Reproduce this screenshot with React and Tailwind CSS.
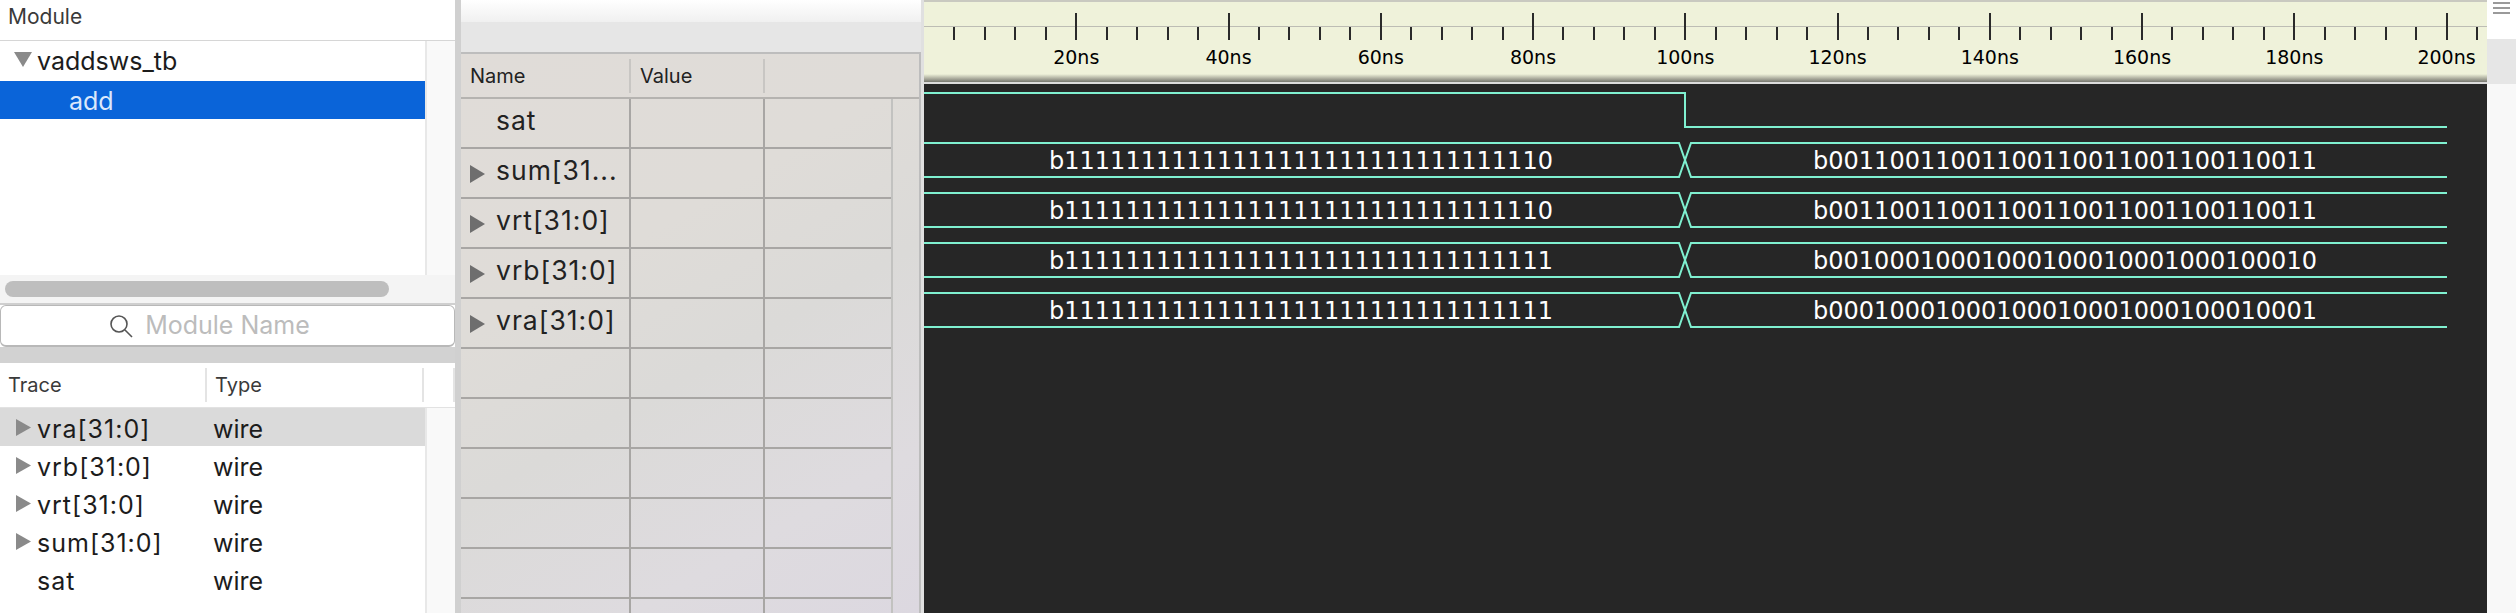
const sans = "font-['Inter','Noto_Sans',sans-serif]";

const traces = [
  { name: "vra[31:0]", bus: true, active: true },
  { name: "vrb[31:0]", bus: true },
  { name: "vrt[31:0]", bus: true },
  { name: "sum[31:0]", bus: true },
  { name: "sat", bus: false },
];

const names = [
  { name: "sat", bus: false },
  { name: "sum[31...", bus: true },
  { name: "vrt[31:0]", bus: true },
  { name: "vrb[31:0]", bus: true },
  { name: "vra[31:0]", bus: true },
  {},
  {},
  {},
  {},
  {},
  {},
];

const buses = [
  {
    top: 59,
    left: "b11111111111111111111111111111110",
    right: "b00110011001100110011001100110011",
  },
  {
    top: 109,
    left: "b11111111111111111111111111111110",
    right: "b00110011001100110011001100110011",
  },
  {
    top: 159,
    left: "b11111111111111111111111111111111",
    right: "b00100010001000100010001000100010",
  },
  {
    top: 209,
    left: "b11111111111111111111111111111111",
    right: "b00010001000100010001000100010001",
  },
];

const STEP = 30.45;
const ticks = Array.from({ length: 51 }, (_, i) => i + 1);

function Arrow({ down, className }) {
  return (
    <svg viewBox="0 0 16 16" preserveAspectRatio="none" className={`block ${className}`}>
      {down ? (
        <polygon points="0,0 16,0 8,16" fill="currentColor" />
      ) : (
        <polygon points="0,0 16,8 0,16" fill="currentColor" />
      )}
    </svg>
  );
}

function Ruler() {
  return (
    <div className="h-[84px] bg-[#eff2da]">
      <svg width="1563" height="84" className="block">
        <rect x="0" y="0" width="1563" height="2" fill="#c9c9c0" />
        <rect x="0" y="26" width="1563" height="1" fill="#bdbdb4" />
        {ticks.map((i) => (
          <line
            key={i}
            x1={Math.round(i * STEP)}
            x2={Math.round(i * STEP)}
            y1={i % 5 === 0 ? 13 : 27}
            y2="40"
            stroke="#2a2a2a"
            strokeWidth="2"
          />
        ))}
        {ticks
          .filter((i) => i % 5 === 0)
          .map((i) => (
            <text
              key={i}
              x={i * STEP}
              y="64"
              textAnchor="middle"
              fontSize="19"
              fill="#000"
              fontFamily="'DejaVu Sans', sans-serif"
            >
              {i * 4}ns
            </text>
          ))}
        <defs>
          <linearGradient id="rulerEdge" x1="0" y1="0" x2="0" y2="1">
            <stop offset="0" stopColor="#eff2da" />
            <stop offset="1" stopColor="#77776f" />
          </linearGradient>
        </defs>
        <rect x="0" y="74" width="1563" height="8" fill="url(#rulerEdge)" />
        <rect x="0" y="82" width="1563" height="2" fill="#dcdcdc" />
      </svg>
    </div>
  );
}

function Waves() {
  const c = "#7ff0d0";
  return (
    <svg width="1563" height="529" className="block">
      <polyline
        points="0,9 761,9 761,43 1523,43"
        fill="none"
        stroke={c}
        strokeWidth="2"
      />
      {buses.map((b) => {
        const y1 = b.top;
        const y2 = b.top + 34;
        return (
          <g key={b.top}>
            <polyline
              points={`0,${y1} 755,${y1} 767,${y2} 1523,${y2}`}
              fill="none"
              stroke={c}
              strokeWidth="2"
            />
            <polyline
              points={`0,${y2} 755,${y2} 767,${y1} 1523,${y1}`}
              fill="none"
              stroke={c}
              strokeWidth="2"
            />
            <text
              x="377"
              y={y1 + 26}
              textAnchor="middle"
              fontSize="24"
              fill="#fff"
              fontFamily="'DejaVu Sans', sans-serif"
            >
              {b.left}
            </text>
            <text
              x="1141"
              y={y1 + 26}
              textAnchor="middle"
              fontSize="24"
              fill="#fff"
              fontFamily="'DejaVu Sans', sans-serif"
            >
              {b.right}
            </text>
          </g>
        );
      })}
    </svg>
  );
}

export default function App() {
  return (
    <div className={`flex w-[2516px] h-[613px] overflow-hidden bg-white ${sans}`}>
      {/* Left Side */}
      <div className="w-[455px] shrink-0 flex flex-col">
        <div className="h-[41px] border-b border-[#d6d6d6] pl-2 pb-[6px] flex items-center text-[21px] text-[#3a3a3a]">
          Module
        </div>

        <div className="h-[234px] flex">
          <div className="w-[425px] text-[25px] text-[#1c1c1c]">
            <div className="h-[40px] flex items-center pt-[2px]">
              <Arrow down className="w-[18px] h-[15px] ml-[14px] mr-[5px] -mt-[6px] text-[#8a8a8a]" />
              vaddsws_tb
            </div>
            <div className="h-[38px] bg-[#0a64d9] text-[#dbe8fb] flex items-center pl-[69px] pt-[3px]">
              add
            </div>
          </div>
          <div className="w-[30px] bg-[#f9f9f9] border-l-2 border-[#e8e8e8]" />
        </div>

        <div className="h-[30px] bg-[#f4f4f4] flex items-center pl-[5px] pr-[66px] border-b-2 border-[#cfcfcf]">
          <div className="h-[16px] w-full rounded-full bg-[#bebebe]" />
        </div>

        <div className="h-[42px] bg-white rounded-md border border-[#b8b8b8] border-b-2 flex items-center justify-center gap-3 pr-[36px] pt-[1px] text-[25px] text-[#bcbcbc]">
          <svg width="24" height="24" viewBox="0 0 24 24" fill="none" stroke="#555" strokeWidth="1.6">
            <circle cx="10" cy="10" r="8" />
            <line x1="16" y1="16" x2="23" y2="23" />
          </svg>
          Module Name
        </div>

        <div className="h-[16px] bg-[#d2d2d2]" />

        <div className="h-[45px] border-b border-[#e2e2e2] flex items-center text-[20px] text-[#3a3a3a]">
          <div className="w-[207px] h-[34px] pl-2 flex items-center border-r-2 border-[#e4e4e4]">Trace</div>
          <div className="w-[217px] h-[34px] pl-[8px] flex items-center border-r-2 border-[#e4e4e4]">Type</div>
          <div className="flex-1 h-[34px] border-r-2 border-[#e4e4e4]" />
        </div>

        <div className="flex-1 flex min-h-0">
          <div className="w-[425px] text-[25px] text-[#1c1c1c]">
            {traces.map((t) => (
              <div
                key={t.name}
                className={`h-[38px] flex items-center ${t.active ? "bg-[#dadada]" : ""}`}
              >
                <div className="w-[37px] pl-[16px]">
                  {t.bus && <Arrow className="w-[15px] h-[17px] text-[#8a8a8a]" />}
                </div>
                <div className="w-[176px] pt-[5px] tracking-[1px]">{t.name}</div>
                <div className="pt-[5px]">wire</div>
              </div>
            ))}
          </div>
          <div className="w-[30px] bg-[#f9f9f9] border-l-2 border-[#e8e8e8]" />
        </div>
      </div>

      {/* Splitter */}
      <div className="w-[6px] shrink-0 bg-[#d0d0d0]" />

      {/* Names */}
      <div className="w-[460px] shrink-0 flex flex-col">
        <div className="h-[22px] bg-gradient-to-b from-white to-[#f0f0f0]" />
        <div className="h-[30px] bg-[#e6e6e6]" />
        <div className="flex-1 border-t-2 border-r-2 border-[#bdbdbd] bg-[linear-gradient(150deg,#e0dcd8_0%,#dfdcd8_35%,#dbdad8_55%,#dedbdf_80%,#dcd8e0_100%)] text-[#222] min-h-0">
          <div className="h-[45px] border-b-2 border-[#b5b3b0] flex items-center text-[20px]">
            <div className="w-[170px] h-[34px] pl-[9px] flex items-center border-r-2 border-[#c8c6c3]">Name</div>
            <div className="w-[134px] h-[34px] pl-[9px] flex items-center border-r-2 border-[#c8c6c3]">Value</div>
          </div>
          <div className="flex">
            <div className="w-[430px] text-[26.5px]">
              {names.map((n, i) => (
                <div key={i} className="h-[50px] flex border-b-2 border-[#a8a6a4]">
                  <div className="w-[170px] border-r-2 border-[#a8a6a4] flex items-center">
                    <div className="w-[35px] pl-[9px]">
                      {n.bus && <Arrow className="w-[15px] h-[18px] mt-[2px] text-[#6e6e6e]" />}
                    </div>
                    <div className="pb-[4px] tracking-[1px] whitespace-nowrap">{n.name}</div>
                  </div>
                  <div className="w-[134px] border-r-2 border-[#a8a6a4]" />
                </div>
              ))}
            </div>
            <div className="flex-1 border-l-2 border-[#c2c2c0]" />
          </div>
        </div>
      </div>

      <div className="w-[3px] shrink-0 bg-[#e0e0e0]" />

      {/* Waveform */}
      <div className="w-[1563px] shrink-0 flex flex-col bg-[#262626]">
        <Ruler />
        <Waves />
      </div>

      {/* Right Side */}
      <div className="flex-1 flex flex-col">
        <div className="h-[39px] bg-white pt-[2px] px-[6px] flex flex-col gap-[3px]">
          <div className="h-[2px] bg-[#9a9a9a]" />
          <div className="h-[2px] bg-[#9a9a9a]" />
          <div className="h-[2px] bg-[#9a9a9a]" />
        </div>
        <div className="h-[45px] bg-[#e6e6e6]" />
        <div className="flex-1 bg-[#f8f8f8]" />
      </div>
    </div>
  );
}
